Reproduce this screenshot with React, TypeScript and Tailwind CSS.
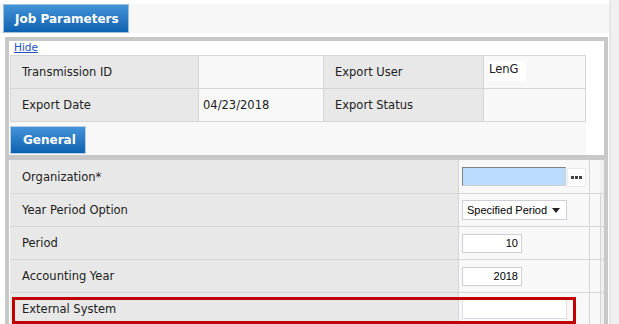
const header = [
  [
    { label: 'Transmission ID', value: '' },
    { label: 'Export User', value: 'LenG' },
  ],
  [
    { label: 'Export Date', value: '04/23/2018' },
    { label: 'Export Status', value: '' },
  ],
];

function TextBox({ value, width, align = 'left' }: { value: string; width: string; align?: 'left' | 'right' }) {
  return (
    <div
      className={`flex h-[19px] ${width} items-center border border-[#cfcfd6] bg-white px-[3px] font-['Liberation_Sans',Arial,sans-serif] text-[11px] text-black ${
        align === 'right' ? 'justify-end' : 'justify-start'
      }`}
    >
      {value}
    </div>
  );
}

function Row({
  label,
  first,
  children,
  highlight,
}: {
  label: string;
  first?: boolean;
  children?: React.ReactNode;
  highlight?: boolean;
}) {
  return (
    <div className={`relative flex h-[33px] shrink-0 ${first ? '' : 'border-t border-[#d6d6d6]'}`}>
      <div className="flex w-[449px] items-center border-r border-[#d6d6d6] bg-[#e8e8e8] pl-[12px] pt-[2px]">{label}</div>
      <div className="flex w-[130px] items-center bg-[#f8f8f8] pl-[2px]">{children}</div>
      <div className="w-[11px] border-l border-[#d6d6d6] bg-[#f8f8f8]" />
      <div className={`w-[4px] bg-[#f0f0f0] ${first ? '' : 'border-l border-[#d6d6d6]'}`} />
      {highlight && (
        <div className="absolute left-[2px] top-[4px] h-[27px] w-[564px] border-[3px] border-[#c00000]" />
      )}
    </div>
  );
}

export default function App() {
  return (
    <div className="flex h-[324px] w-[619px] overflow-hidden bg-white font-['DejaVu_Sans',Verdana,sans-serif] text-[11.5px] text-[#202020]">
      <div className="flex w-[609px] shrink-0 flex-col">
        <div className="mt-[4px] flex h-[29px] shrink-0 bg-[#f7f7f7] pl-[3px]">
          <div className="flex w-[126px] items-center border border-[#9fbfdc] bg-gradient-to-b from-[#4393d9] to-[#0b62b0] pl-[11px] pt-px text-[12px] font-bold text-white">
            Job Parameters
          </div>
        </div>

        <div className="ml-[5px] mt-[4px] flex min-h-0 w-[603px] flex-1 flex-col overflow-hidden border-x-4 border-t-4 border-[#c8c8c8] bg-white">
          <div className="flex h-[14px] shrink-0 items-center pl-[5px]">
            <a href="#" className="text-[10.5px] text-[#1c4fc0] underline">
              Hide
            </a>
          </div>

          <div className="ml-px w-[576px] shrink-0 border border-[#d6d6d6]">
            {header.map((row, i) => (
              <div key={i} className={`flex ${i ? 'h-[33px] border-t border-[#d6d6d6]' : 'h-[32px]'}`}>
                {row.map((cell, j) => (
                  <div key={j} className="flex">
                    <div
                      className={`flex items-center border-r border-[#d6d6d6] bg-[#e8e8e8] pl-[11px] pt-px ${
                        j ? 'w-[160px]' : 'w-[188px]'
                      }`}
                    >
                      {cell.label}
                    </div>
                    <div
                      className={`flex items-center bg-[#f8f8f8] pl-[4px] pt-px ${
                        j ? 'w-[101px]' : 'w-[125px] border-r border-[#d6d6d6]'
                      }`}
                    >
                      {cell.value && j === 1 ? (
                        <span className="-mt-[3px] bg-white px-[1px] pb-[3px] pr-[8px]">{cell.value}</span>
                      ) : (
                        cell.value
                      )}
                    </div>
                  </div>
                ))}
              </div>
            ))}
          </div>

          <div className="ml-px flex h-[33px] w-[576px] shrink-0 items-end bg-[#f8f8f8] pb-px">
            <div className="flex h-[28px] w-[76px] items-center border border-[#b8cfe3] bg-gradient-to-b from-[#4393d9] to-[#0b62b0] pl-[12px] text-[12px] font-bold text-white">
              General
            </div>
          </div>

          <div className="h-[5px] shrink-0 bg-[#c8c8c8]" />

          <div className="flex shrink-0 flex-col pl-px">
            <Row label="Organization*" first>
              <div className="ml-px flex items-center">
                <div className="h-[19px] w-[104px] border border-[#808080] border-b-[#d0d0d0] border-r-[#d0d0d0] bg-[#bbdcfe]" />
                <div className="ml-px mt-[2px] flex h-[19px] w-[19px] items-center justify-center gap-[1px] border border-[#ececec] bg-white">
                  <span className="h-[3px] w-[3px] bg-[#444]" />
                  <span className="h-[3px] w-[3px] bg-[#444]" />
                  <span className="h-[3px] w-[3px] bg-[#444]" />
                </div>
              </div>
            </Row>
            <Row label="Year Period Option">
              <div className="ml-px flex h-[20px] w-[105px] items-center justify-between border border-[#cfcfd6] bg-white pl-[4px] pr-[6px] font-['Liberation_Sans',Arial,sans-serif] text-[11px] text-black">
                <span>Specified Period</span>
                <svg width="8" height="5" viewBox="0 0 8 5">
                  <path d="M0 0h8L4 5z" fill="#222" />
                </svg>
              </div>
            </Row>
            <Row label="Period">
              <div className="ml-px">
                <TextBox value="10" width="w-[60px]" align="right" />
              </div>
            </Row>
            <Row label="Accounting Year">
              <div className="ml-px">
                <TextBox value="2018" width="w-[60px]" align="right" />
              </div>
            </Row>
            <Row label="External System" highlight>
              <div className="ml-px">
                <div className="h-[20px] w-[105px] border border-[#dcdce4] bg-white" />
              </div>
            </Row>
          </div>
        </div>
      </div>
      <div className="w-[10px] border-l-2 border-[#e6e6e6] bg-[#f0f0f0]" />
    </div>
  );
}
